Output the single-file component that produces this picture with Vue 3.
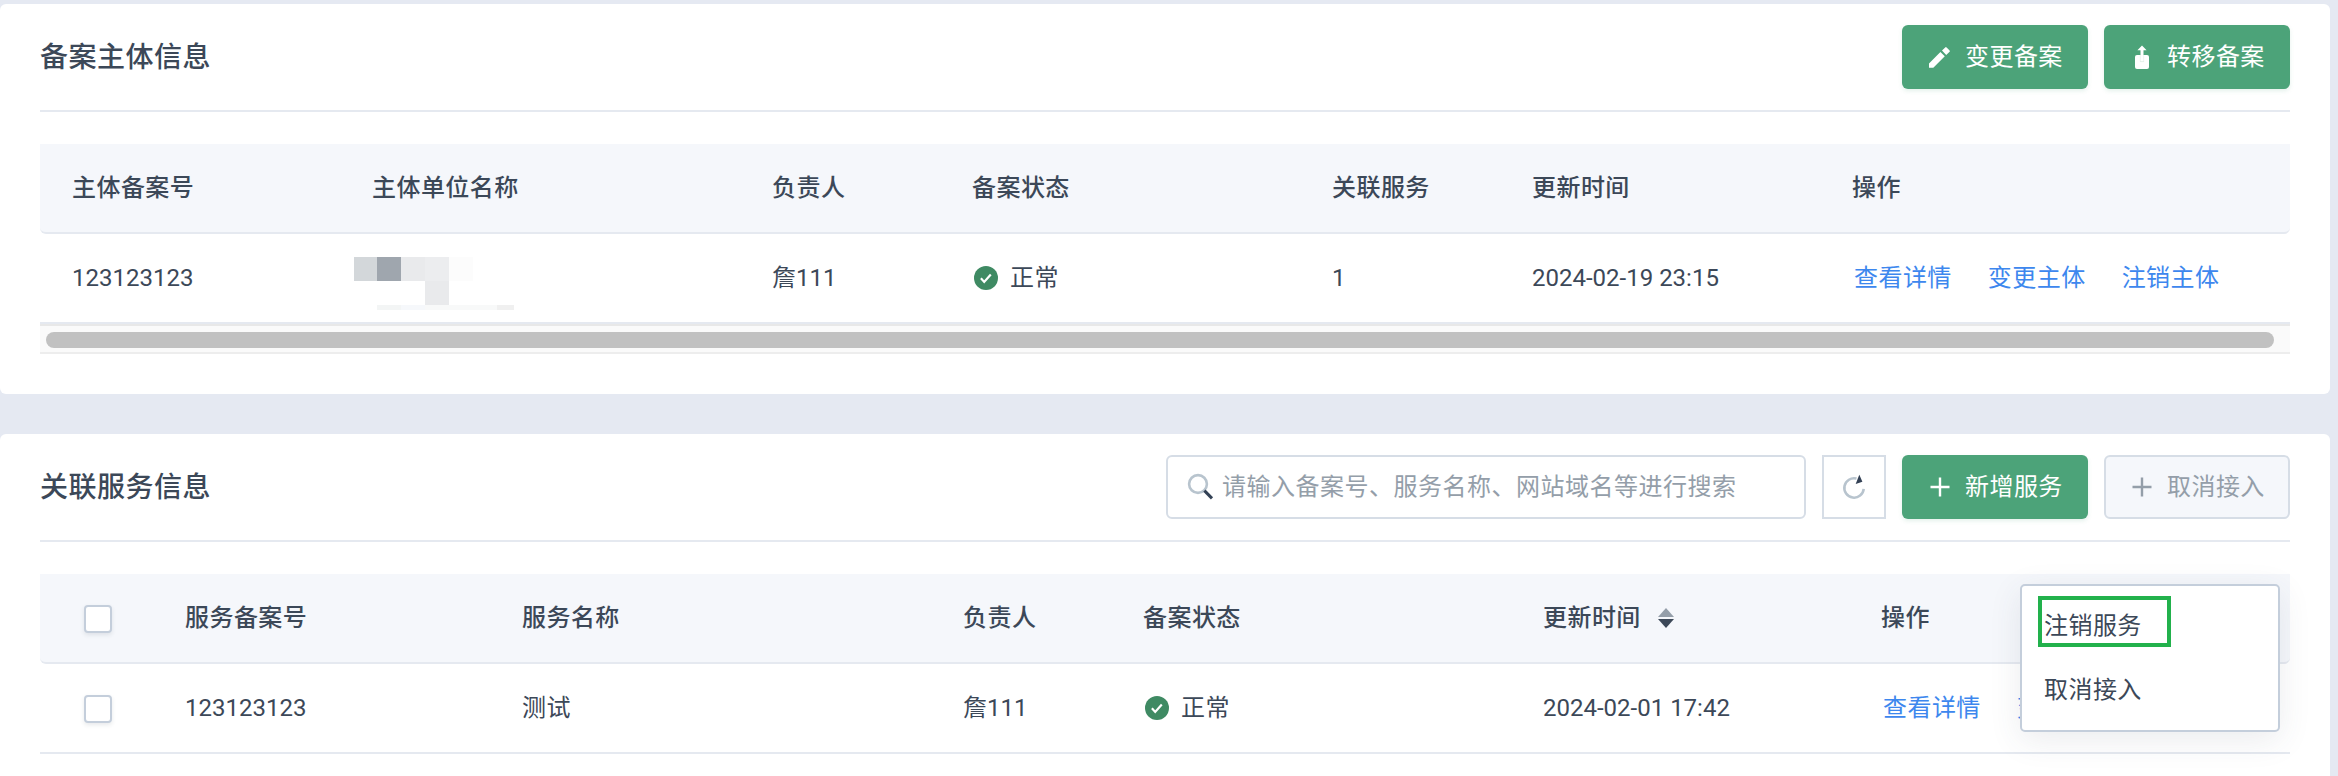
<script setup>
const subjectColumns = ['主体备案号', '主体单位名称', '负责人', '备案状态', '关联服务', '更新时间', '操作']
const subjectLinks = ['查看详情', '变更主体', '注销主体']
const serviceLinks = ['查看详情', '变更服务']
const menuItems = ['注销服务', '取消接入']
</script>

<template>
  <div class="page">
    <section class="card first">
      <header class="card-head">
        <h2>备案主体信息</h2>
        <div class="tools">
          <button class="btn">
            <svg viewBox="0 0 28 28"><path d="M3 20.5v4.3h4.3L18.8 13.3l-4.4-4.4zM20.2 11.9l3.4-3.1q.6-.7 0-1.4l-3-3q-.7-.6-1.4 0l-3.2 3.1z" fill="#fff" /></svg>
            <span>变更备案</span>
          </button>
          <button class="btn">
            <svg viewBox="0 0 28 28">
              <rect x="7" y="12" width="14" height="14" rx="2" fill="#fff" />
              <path d="M12.4 12v6.6h3.2V12" fill="none" stroke="#d3e8dd" stroke-width=".8" />
              <path d="M14 2.6l4.6 4.6h-3.1v11h-3v-11H9.4z" fill="#fff" />
            </svg>
            <span>转移备案</span>
          </button>
        </div>
      </header>
      <div class="table">
        <div class="row head subject">
          <div v-for="c in subjectColumns" :key="c">{{ c }}</div>
        </div>
        <div class="row subject">
          <div class="num">123123123</div>
          <div class="masked">
            <svg viewBox="0 0 160 54" shape-rendering="crispEdges">
              <rect x="0" y="1" width="23" height="24" fill="#d3d7da" />
              <rect x="23" y="1" width="24" height="24" fill="#9fa6ae" />
              <rect x="47" y="1" width="24" height="24" fill="#e9eaec" />
              <rect x="71" y="1" width="24" height="24" fill="#ecedef" />
              <rect x="95" y="1" width="24" height="24" fill="#fcfcfc" />
              <rect x="71" y="25" width="24" height="24" fill="#e9eaec" />
              <rect x="23" y="49" width="24" height="5" fill="#f3f5f5" />
              <rect x="47" y="49" width="24" height="5" fill="#f6f8fb" />
              <rect x="71" y="49" width="72" height="5" fill="#f8f9f9" />
              <rect x="143" y="49" width="17" height="5" fill="#f0f0f0" />
            </svg>
          </div>
          <div class="num">詹111</div>
          <div class="status">
            <svg viewBox="0 0 24 24"><circle cx="12" cy="12" r="12" fill="#3f8a63" /><path d="M6.9 12.3l3.3 3.6 6.6-7.5" fill="none" stroke="#fff" stroke-width="2.2" /></svg>
            <span>正常</span>
          </div>
          <div class="num">1</div>
          <div class="num">2024-02-19 23:15</div>
          <div class="links"><a v-for="l in subjectLinks" :key="l">{{ l }}</a></div>
        </div>
        <div class="scrollbar"><div class="thumb"></div></div>
      </div>
    </section>

    <section class="card second">
      <header class="card-head">
        <h2>关联服务信息</h2>
        <div class="tools">
          <label class="search">
            <svg viewBox="0 0 28 28"><circle cx="11" cy="11" r="8.9" fill="none" stroke="#b8c4ce" stroke-width="2.6" /><path d="M17.4 17.6l7.6 7.8" stroke="#334155" stroke-width="3" /></svg>
            <span>请输入备案号、服务名称、网站域名等进行搜索</span>
          </label>
          <button class="refresh">
            <svg viewBox="0 0 28 28"><path d="M16.5 5.6A9.7 9.7 0 1 0 23.7 15.8" fill="none" stroke="#b8c4ce" stroke-width="2.6" /><path d="M19.3 1.7L15.7 11l6.7-2.3z" fill="#334155" /></svg>
          </button>
          <button class="btn">
            <svg viewBox="0 0 28 28"><path d="M4.5 14h19M14 4.5v19" stroke="#fff" stroke-width="2.4" /></svg>
            <span>新增服务</span>
          </button>
          <button class="btn disabled">
            <svg viewBox="0 0 28 28"><path d="M4.5 14h19M14 4.5v19" stroke="#949ea9" stroke-width="2.4" /></svg>
            <span>取消接入</span>
          </button>
        </div>
      </header>
      <div class="table">
        <div class="row head service">
          <div class="check"><i></i></div>
          <div>服务备案号</div>
          <div>服务名称</div>
          <div>负责人</div>
          <div>备案状态</div>
          <div class="sortable">
            更新时间
            <svg viewBox="0 0 16 20"><path d="M8 0l8 9H0z" fill="#949ea9" /><path d="M8 20l8-9H0z" fill="#3c4858" /></svg>
          </div>
          <div>操作</div>
        </div>
        <div class="row service">
          <div class="check"><i></i></div>
          <div class="num">123123123</div>
          <div>测试</div>
          <div class="num">詹111</div>
          <div class="status">
            <svg viewBox="0 0 24 24"><circle cx="12" cy="12" r="12" fill="#3f8a63" /><path d="M6.9 12.3l3.3 3.6 6.6-7.5" fill="none" stroke="#fff" stroke-width="2.2" /></svg>
            <span>正常</span>
          </div>
          <div class="num">2024-02-01 17:42</div>
          <div class="links"><a v-for="l in serviceLinks" :key="l">{{ l }}</a></div>
        </div>
        <div class="menu">
          <div v-for="m in menuItems" :key="m" class="item">{{ m }}</div>
          <div class="marker"></div>
        </div>
      </div>
    </section>
  </div>
</template>

<style>
body {
  margin: 0;
  overflow: hidden;
}
</style>

<style scoped>
.page {
  box-sizing: border-box;
  width: 2338px;
  height: 776px;
  padding: 4px 8px 0 0;
  overflow: hidden;
  background: #e5e9f2;
  color: #3c4858;
  font: 400 24px/36px Roboto, "Noto Sans CJK SC", sans-serif;
  letter-spacing: 0.45px;
}
.page * {
  box-sizing: border-box;
}
.card {
  padding: 0 40px;
  background: #fff;
  border-radius: 6px;
}
.first {
  height: 390px;
  margin-bottom: 40px;
}
.second {
  height: 400px;
}
.card-head {
  display: flex;
  align-items: center;
  justify-content: space-between;
  height: 108px;
  border-bottom: 2px solid #e5e9f0;
}
h2 {
  margin: 0;
  padding-top: 2px;
  font-size: 28px;
  font-weight: 500;
  letter-spacing: 0.5px;
}
.tools {
  display: flex;
  gap: 16px;
}
.btn,
.refresh {
  display: flex;
  align-items: center;
  height: 64px;
  border: 0;
  font: inherit;
  letter-spacing: inherit;
}
.btn {
  gap: 11px;
  width: 186px;
  padding: 0 24px;
  border-radius: 6px;
  background: #4ca379;
  box-shadow: 0 2px 4px rgba(76, 163, 121, 0.15);
  color: #fff;
  white-space: nowrap;
}
.btn svg {
  flex: none;
  width: 28px;
  height: 28px;
}
.btn.disabled {
  padding: 0 22px;
  border: 2px solid #d6dde6;
  background: #f5f7fb;
  box-shadow: none;
  color: #949ea9;
}
.search {
  display: flex;
  align-items: center;
  gap: 7px;
  width: 640px;
  height: 64px;
  padding-left: 19px;
  border: 2px solid #d6dde6;
  border-radius: 6px;
  color: #949ea9;
  letter-spacing: 0.5px;
}
.search svg {
  width: 28px;
  height: 28px;
}
.refresh {
  justify-content: center;
  width: 64px;
  padding: 0;
  border: 2px solid #d6dde6;
  background: #fff;
}
.refresh svg {
  width: 28px;
  height: 28px;
}
.table {
  position: relative;
  margin-top: 32px;
}
.row {
  display: grid;
  height: 90px;
  border-bottom: 2px solid #e5e9f0;
}
.row > div {
  display: flex;
  align-items: center;
  padding-left: 32px;
  white-space: nowrap;
}
.subject {
  grid-template-columns: 300px 400px 200px 360px 200px 320px 1fr;
}
.service {
  grid-template-columns: 113px 337px 441px 180px 400px 338px 1fr;
}
.head {
  background: #f5f7fb;
  border-radius: 0 0 6px 6px;
  font-weight: 500;
}
.num {
  letter-spacing: 0;
}
.row > .masked {
  align-items: flex-start;
  padding: 22px 0 0 14px;
}
.masked svg {
  width: 160px;
  height: 54px;
}
.row > .status {
  gap: 12px;
  padding-left: 34px;
}
.status svg {
  width: 24px;
  height: 24px;
}
.links {
  gap: 36px;
  color: #3d87ee;
}
.row > .links {
  padding-left: 34px;
}
.scrollbar {
  height: 30px;
  padding: 6px 16px 0 6px;
  border-top: 2px solid #e8e8e8;
  border-bottom: 2px solid #ededed;
  background: #fafafa;
}
.thumb {
  height: 16px;
  border-radius: 8px;
  background: #c1c1c1;
}
.row > .check {
  padding: 2px 0 0 44px;
}
.check i {
  width: 28px;
  height: 28px;
  border: 2px solid #c4cedb;
  border-radius: 4px;
  background: #fff;
  box-shadow: 0 2px 4px rgba(60, 72, 88, 0.12);
}
.sortable svg {
  width: 16px;
  height: 20px;
  margin-left: 17px;
}
.menu {
  position: absolute;
  top: 10px;
  left: 1980px;
  width: 260px;
  height: 148px;
  padding: 8px 22px;
  border: 2px solid #c4cedb;
  border-radius: 5px;
  background: #fff;
  box-shadow: 0 8px 32px rgba(60, 72, 88, 0.1);
}
.item {
  height: 64px;
  line-height: 64px;
}
.marker {
  position: absolute;
  top: 10px;
  left: 16px;
  width: 133px;
  height: 51px;
  border: 4px solid #22b14c;
}
</style>
